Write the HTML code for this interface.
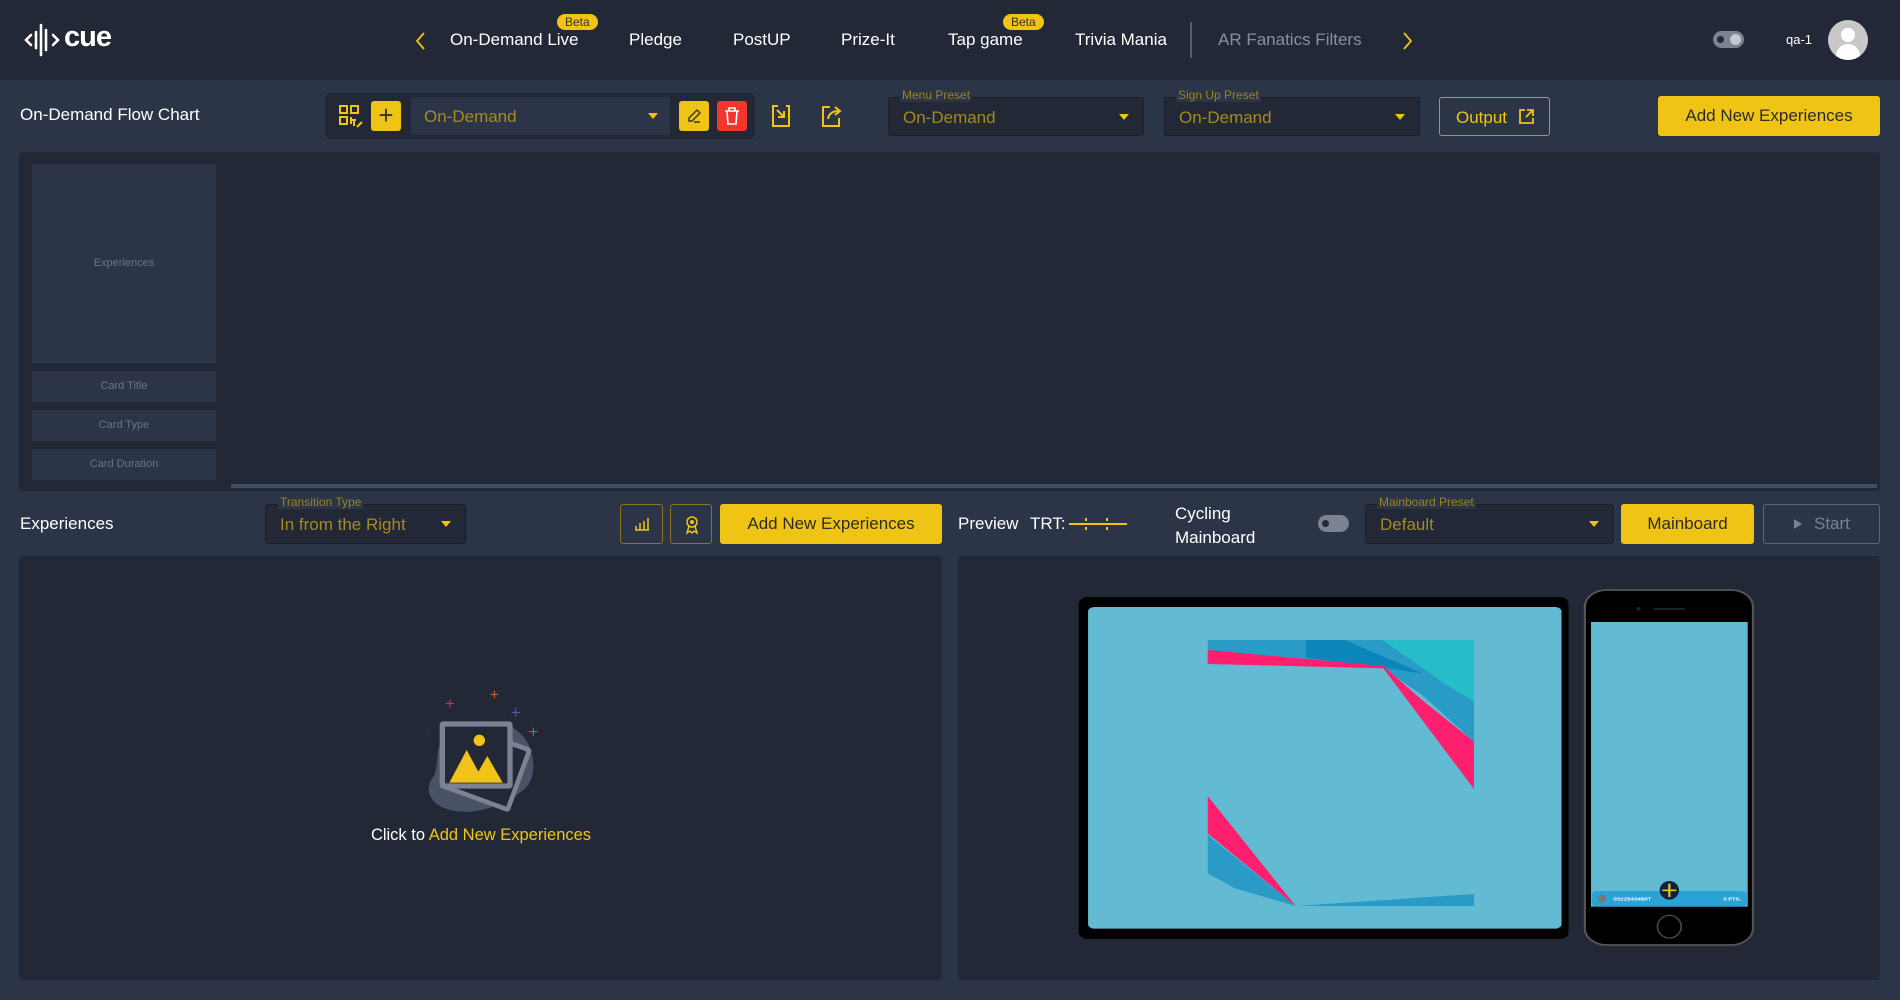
<!DOCTYPE html>
<html><head><meta charset="utf-8"><style>
*{box-sizing:border-box;margin:0;padding:0}
body{width:1900px;height:1000px;background:#2b3547;font-family:"Liberation Sans",sans-serif;position:relative;overflow:hidden;color:#fff}
.a{position:absolute}
.nav{top:30px;font-size:17px;color:#fff;white-space:nowrap}
.beta{background:#f0c414;color:#333;font-size:12px;border-radius:8px;height:16px;line-height:16px;padding:0 8px;top:14px}
.sel{border:1px solid #1a202b;background:#222836;border-radius:3px}
.sel .t{position:absolute;left:14px;top:10px;font-size:17px;color:#a48b1e}
.sel .c{position:absolute;right:14px;top:16px;width:0;height:0;border-left:5px solid transparent;border-right:5px solid transparent;border-top:6px solid #f0c414}
.lbl{font-size:12px;color:#9a8420;background:#2b3547;padding:0 2px}
.yb{background:#f0c414;border-radius:3px;color:#2b2b2b;font-size:17px;text-align:center}
.ob{border:1px solid #8a7520;border-radius:3px}
.card{background:#2c3548;color:#6b7487;font-size:11px;text-align:center}
</style></head><body>
<div class="a" style="left:0;top:0;width:1900px;height:80px;background:#222836"></div>
<svg class="a" style="left:24px;top:22px" width="36" height="36" viewBox="0 0 36 36"><g stroke="#fff" stroke-width="2.6" fill="none" stroke-linecap="round"><path d="M7 13 L2 18 L7 23"/><path d="M29 13 L34 18 L29 23"/><path d="M12 10 V26"/><path d="M17 3 V33"/><path d="M22 8 V28"/></g></svg>
<div class="a" style="left:64px;top:21px;font-size:29px;font-weight:bold;letter-spacing:-1px">cue</div>
<svg class="a" style="left:414px;top:31px" width="14" height="20" viewBox="0 0 14 20"><path d="M10 2 L3 10 L10 18" stroke="#f0c414" stroke-width="1.8" fill="none"/></svg>
<div class="a nav" style="left:450px">On-Demand Live</div>
<div class="a beta" style="left:557px">Beta</div>
<div class="a nav" style="left:629px">Pledge</div>
<div class="a nav" style="left:733px">PostUP</div>
<div class="a nav" style="left:841px">Prize-It</div>
<div class="a nav" style="left:948px">Tap game</div>
<div class="a beta" style="left:1003px">Beta</div>
<div class="a nav" style="left:1075px">Trivia Mania</div>
<div class="a" style="left:1190px;top:22px;width:2px;height:36px;background:#555d6b"></div>
<div class="a nav" style="left:1218px;color:#8a909b">AR Fanatics Filters</div>
<svg class="a" style="left:1400px;top:31px" width="14" height="20" viewBox="0 0 14 20"><path d="M4 2 L11 10 L4 18" stroke="#f0c414" stroke-width="1.8" fill="none"/></svg>
<div class="a" style="left:1713px;top:31px;width:31px;height:17px;border-radius:9px;background:#7c8390"></div>
<div class="a" style="left:1717px;top:36px;width:7px;height:7px;border-radius:50%;background:#222836"></div>
<div class="a" style="left:1728px;top:32px;width:15px;height:15px;border-radius:50%;background:#c6cad0;border:2px solid #7c8390"></div>
<div class="a" style="left:1786px;top:32px;font-size:13px">qa-1</div>
<div class="a" style="left:1828px;top:20px;width:40px;height:40px;border-radius:50%;background:#c8c8c8;overflow:hidden"><div class="a" style="left:13px;top:8px;width:14px;height:14px;border-radius:50%;background:#fff"></div><div class="a" style="left:8px;top:24px;width:24px;height:16px;border-radius:12px 12px 0 0;background:#fff"></div></div>

<div class="a" style="left:20px;top:105px;font-size:17px">On-Demand Flow Chart</div>
<div class="a" style="left:325px;top:93px;width:430px;height:46px;background:#222836;border-radius:6px"></div>
<svg class="a" style="left:338px;top:104px" width="26" height="26" viewBox="0 0 26 26"><g stroke="#f0c414" stroke-width="2" fill="none"><rect x="2" y="2" width="7" height="7"/><rect x="13" y="2" width="7" height="7"/><rect x="2" y="13" width="7" height="7"/><path d="M13 13 V20 M13 16 H18 M16 16 V22"/><path d="M19 23 L24 18"/></g></svg>
<div class="a yb" style="left:371px;top:101px;width:30px;height:30px;font-size:26px;line-height:28px;color:#333">+</div>
<div class="a" style="left:411px;top:97px;width:259px;height:38px;background:#2c3548;border-radius:3px"><div class="a" style="left:13px;top:10px;font-size:17px;color:#a48b1e">On-Demand</div><div class="a" style="right:12px;top:16px;border-left:5px solid transparent;border-right:5px solid transparent;border-top:6px solid #f0c414"></div></div>
<div class="a yb" style="left:679px;top:101px;width:30px;height:30px"></div>
<svg class="a" style="left:685px;top:107px" width="18" height="18" viewBox="0 0 18 18"><path d="M4 14 L4 11 L12 3 L15 6 L7 14 Z M9 15 H15" stroke="#333" stroke-width="1.4" fill="none"/></svg>
<div class="a" style="left:717px;top:101px;width:30px;height:30px;background:#f3352b;border-radius:3px"></div>
<svg class="a" style="left:723px;top:106px" width="18" height="20" viewBox="0 0 18 20"><path d="M2 5 H16 M6 5 V2 H12 V5 M4 5 L5 18 H13 L14 5" stroke="#fff" stroke-width="1.6" fill="none"/></svg>
<svg class="a" style="left:770px;top:103px" width="22" height="26" viewBox="0 0 22 26"><path d="M8 3 H3 V23 H19 V3 H16 M7 7 L14 14 M14 8 V14 H8" stroke="#f0c414" stroke-width="2" fill="none"/></svg>
<svg class="a" style="left:820px;top:103px" width="24" height="26" viewBox="0 0 24 26"><path d="M10 4 H3 V23 H19 V15 M8 16 C9 10 13 8 19 8 M15 4 L20 8 L15 12" stroke="#f0c414" stroke-width="2" fill="none"/></svg>
<div class="a sel" style="left:888px;top:97px;width:256px;height:39px"><span class="t">On-Demand</span><span class="c"></span></div>
<div class="a lbl" style="left:900px;top:88px">Menu Preset</div>
<div class="a sel" style="left:1164px;top:97px;width:256px;height:39px"><span class="t">On-Demand</span><span class="c"></span></div>
<div class="a lbl" style="left:1176px;top:88px">Sign Up Preset</div>
<div class="a ob" style="left:1439px;top:97px;width:111px;height:39px;border-color:#b89a1c"><span class="a" style="left:16px;top:10px;font-size:17px;color:#f0c414">Output</span><svg class="a" style="left:78px;top:10px" width="17" height="17" viewBox="0 0 17 17"><path d="M7 2 H2 V15 H15 V10 M9 2 H15 V8 M15 2 L8 9" stroke="#f0c414" stroke-width="1.8" fill="none"/></svg></div>
<div class="a yb" style="left:1658px;top:96px;width:222px;height:40px;line-height:40px">Add New Experiences</div>

<div class="a" style="left:19px;top:152px;width:1861px;height:339px;background:#222836;border-radius:4px"></div>
<div class="a card" style="left:32px;top:164px;width:184px;height:199px;line-height:199px">Experiences</div>
<div class="a card" style="left:32px;top:371px;width:184px;height:31px;line-height:31px">Card Title</div>
<div class="a card" style="left:32px;top:410px;width:184px;height:31px;line-height:31px">Card Type</div>
<div class="a card" style="left:32px;top:449px;width:184px;height:31px;line-height:31px">Card Duration</div>
<div class="a" style="left:231px;top:484px;width:1646px;height:4px;background:#3f4d66"></div>

<div class="a" style="left:20px;top:514px;font-size:17px">Experiences</div>
<div class="a sel" style="left:265px;top:504px;width:201px;height:40px"><span class="t">In from the Right</span><span class="c"></span></div>
<div class="a lbl" style="left:278px;top:495px">Transition Type</div>
<div class="a ob" style="left:620px;top:504px;width:43px;height:40px"><svg class="a" style="left:13px;top:12px" width="16" height="14" viewBox="0 0 16 14"><path d="M2 13 V9 M6 13 V6 M10 13 V4 M14 13 V1 M1 13 H15" stroke="#f0c414" stroke-width="1.5" fill="none"/></svg></div>
<div class="a ob" style="left:670px;top:504px;width:42px;height:40px"><svg class="a" style="left:13px;top:10px" width="16" height="20" viewBox="0 0 16 20"><circle cx="8" cy="7" r="5" stroke="#f0c414" stroke-width="1.5" fill="none"/><circle cx="8" cy="7" r="2" fill="#f0c414"/><path d="M5 11 L3 18 L6 16 L8 18 L10 16 L13 18 L11 11" stroke="#f0c414" stroke-width="1.4" fill="none"/></svg></div>
<div class="a yb" style="left:720px;top:504px;width:222px;height:40px;line-height:40px">Add New Experiences</div>
<div class="a" style="left:958px;top:514px;font-size:17px">Preview</div>
<div class="a" style="left:1030px;top:514px;font-size:17px">TRT:</div>
<div class="a" style="left:1069px;top:523px;width:58px;height:2px;background:#f0c414"></div>
<div class="a" style="left:1085px;top:518px;width:2px;height:3px;background:#f0c414"></div><div class="a" style="left:1085px;top:527px;width:2px;height:3px;background:#f0c414"></div>
<div class="a" style="left:1106px;top:518px;width:2px;height:3px;background:#f0c414"></div><div class="a" style="left:1106px;top:527px;width:2px;height:3px;background:#f0c414"></div>
<div class="a" style="left:1175px;top:502px;font-size:17px;line-height:24px">Cycling<br>Mainboard</div>
<div class="a" style="left:1318px;top:515px;width:31px;height:17px;border-radius:9px;background:#7c8390"><div class="a" style="left:4px;top:5px;width:7px;height:7px;border-radius:50%;background:#222836"></div></div>
<div class="a sel" style="left:1365px;top:504px;width:249px;height:40px"><span class="t">Default</span><span class="c"></span></div>
<div class="a lbl" style="left:1377px;top:495px">Mainboard Preset</div>
<div class="a yb" style="left:1621px;top:504px;width:133px;height:40px;line-height:40px">Mainboard</div>
<div class="a" style="left:1763px;top:504px;width:117px;height:40px;border:1px solid #5e6676;border-radius:3px;color:#7c8390;font-size:17px;line-height:38px;padding-left:28px"><span class="a" style="left:30px;top:14px;border-top:5px solid transparent;border-bottom:5px solid transparent;border-left:8px solid #7c8390"></span><span style="margin-left:22px">Start</span></div>

<div class="a" style="left:19px;top:556px;width:923px;height:424px;background:#222836;border-radius:4px"></div>
<div class="a" style="left:958px;top:556px;width:922px;height:424px;background:#222836;border-radius:4px"></div>

<svg class="a" style="left:350px;top:670px" width="260" height="180" viewBox="0 0 780 540">
<path d="M290 190 C360 140 470 140 520 200 C560 250 560 330 520 360 C470 400 380 440 300 420 C240 405 220 360 250 320 C270 290 250 230 290 190Z" fill="#4a5366"/>
<g transform="rotate(20 410 300)"><rect x="300" y="200" width="210" height="190" fill="#222836" stroke="#7a8294" stroke-width="14" rx="4"/></g>
<rect x="277" y="162" width="203" height="186" fill="#222836" stroke="#7a8294" stroke-width="16" rx="3"/>
<circle cx="388" cy="211" r="17" fill="#f0c419"/>
<path d="M298 338 L350 240 L385 305 L412 258 L458 338 Z" fill="#f0c419"/>
<g stroke-width="3" fill="none">
<path d="M300 88 V112 M288 100 H312" stroke="#d23a63"/>
<path d="M433 62 V84 M422 73 H444" stroke="#e5661f"/>
<path d="M497 114 V140 M484 127 H510" stroke="#6b4ee0"/>
<path d="M550 172 V198 M537 185 H563" stroke="#2aaa5a"/>
<path d="M234 174 V196 M223 185 H245" stroke="#2d2a5a"/>
</g></svg>
<div class="a" style="left:281px;top:826px;width:400px;text-align:center;font-size:16.5px">Click to <span style="color:#f0c414">Add New Experiences</span></div>

<svg class="a" style="left:1070px;top:585px" width="690" height="365" viewBox="0 0 1568 1095" preserveAspectRatio="none">
<rect x="20" y="36" width="1113" height="1026" rx="20" fill="#000"/>
<rect x="41" y="66" width="1076" height="965" rx="14" fill="#62bbd3"/>
<polygon points="313,165 918,165 918,470 800,330 710,248 313,237" fill="#2a9ac7"/>
<polygon points="536,165 625,165 800,265 710,248 536,218" fill="#0a86ba"/>
<polygon points="710,165 918,165 918,350 850,295" fill="#26bcc8"/>
<polygon points="313,195 712,243 800,345 918,470 918,612 712,250 313,237" fill="#ff1f6e"/>
<polygon points="313,750 313,865 375,910 513,963" fill="#2a9ac7"/>
<polygon points="313,633 513,963 313,745" fill="#ff1f6e"/>
<polygon points="513,963 918,927 918,963" fill="#2a9ac7"/>
<rect x="1170" y="15" width="382" height="1065" rx="50" fill="#000" stroke="#555" stroke-width="5"/>
<rect x="1184" y="111" width="356" height="854" fill="#62bbd3"/>
<rect x="1186" y="918" width="352" height="47" rx="10" fill="#2aa3d6"/>
<ellipse cx="1209" cy="941" rx="9" ry="12" fill="#777"/>
<text x="1235" y="947" font-size="14" fill="#fff" font-family="Liberation Sans" font-weight="bold">0322543480T</text>
<text x="1485" y="947" font-size="13" fill="#fff" font-family="Liberation Sans" font-weight="bold">0 PTS.</text>
<ellipse cx="1362" cy="916" rx="22" ry="28" fill="#0d2240"/>
<path d="M1362 896 V936 M1346 916 H1378" stroke="#f0c414" stroke-width="5"/>
<rect x="1325" y="69" width="73" height="6" rx="3" fill="#222"/>
<ellipse cx="1292" cy="72" rx="5" ry="6" fill="#222"/>
<ellipse cx="1362" cy="1025" rx="27" ry="34" fill="none" stroke="#444" stroke-width="4"/>
</svg>
</body></html>
